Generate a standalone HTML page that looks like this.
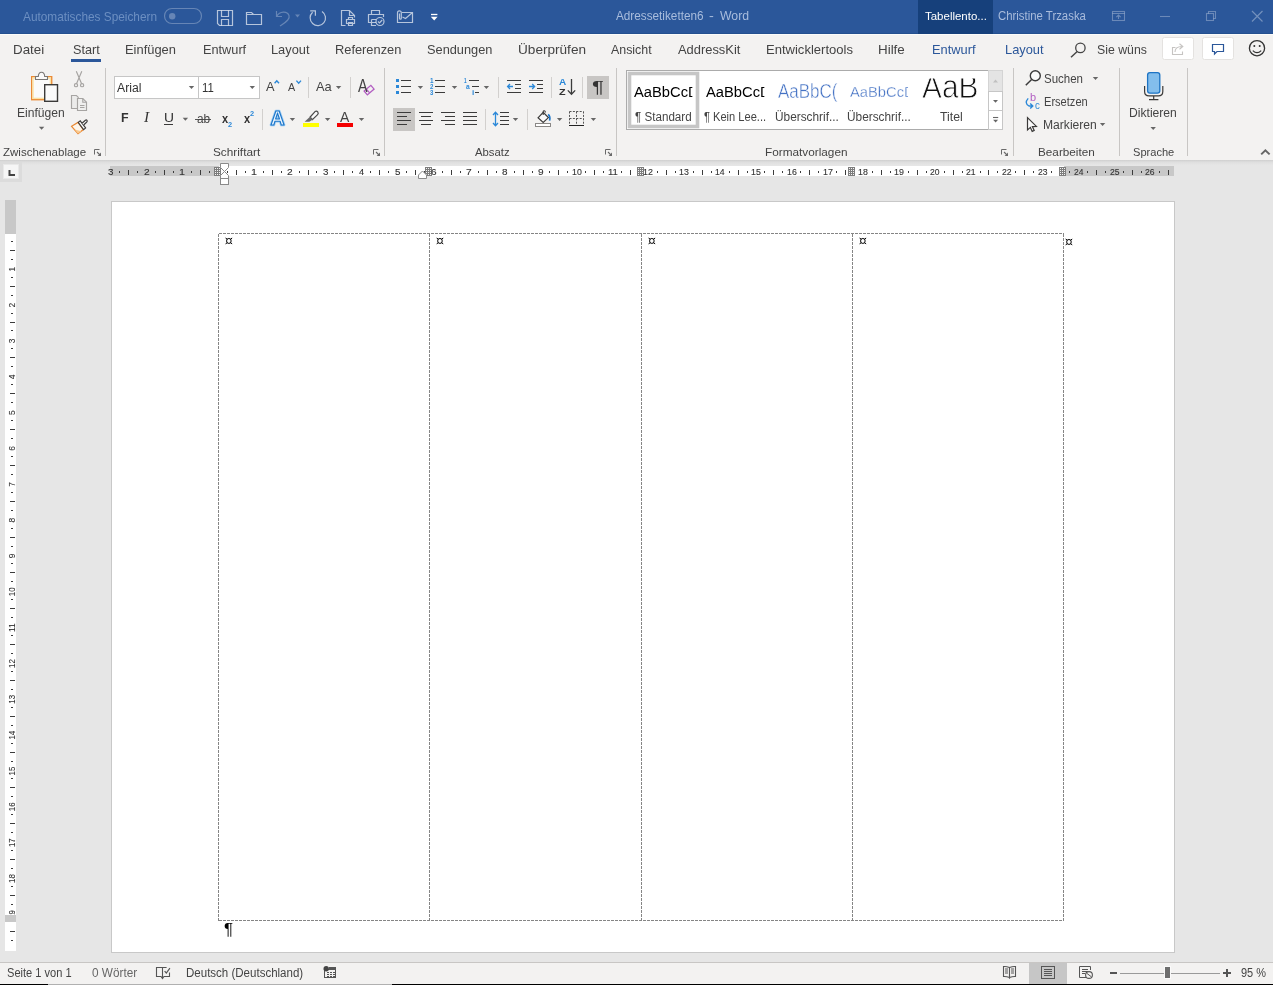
<!DOCTYPE html>
<html lang="de"><head><meta charset="utf-8"><title>Adressetiketten6 - Word</title>
<style>
html,body{margin:0;padding:0}
body{width:1273px;height:985px;position:relative;overflow:hidden;background:#e6e6e6;font-family:"Liberation Sans",sans-serif}
.b{position:absolute}
.t{position:absolute;white-space:pre;line-height:1;transform-origin:0 0;display:block}
svg{position:absolute;left:0;top:0;will-change:transform}
</style></head>
<body>
<div class="b" style="left:0;top:0;width:1273px;height:34px;background:#2b579a"></div>
<div class="b" style="left:0;top:33px;width:1273px;height:1px;background:#24508f"></div>
<div class="b" style="left:918px;top:0;width:75px;height:34px;background:#16407b"></div>
<div class="b" style="left:0;top:34px;width:1273px;height:126px;background:#f3f2f1"></div>
<div class="b" style="left:0;top:34px;width:1273px;height:1px;background:#fbfbfa"></div>
<div class="b" style="left:0;top:160px;width:1273px;height:5px;background:linear-gradient(#cfcfcf,#dedede 40%,#e6e6e6)"></div>
<div class="b" style="left:71px;top:59px;width:30px;height:3px;background:#2b579a"></div>
<div class="b" style="left:111px;top:201px;width:1064px;height:752px;background:#fff;border:1px solid #c8c8c8;box-sizing:border-box;border-right-color:#c8c8c8"></div>
<div class="b" style="left:0;top:962px;width:1273px;height:1px;background:#c8c6c4"></div>
<div class="b" style="left:0;top:963px;width:1273px;height:22px;background:#f3f2f1"></div>
<div class="b" style="left:1029px;top:963px;width:38px;height:21px;background:#c6c6c6"></div>
<div class="b" style="left:0;top:984px;width:48px;height:1px;background:#000"></div>
<div class="b" style="left:48px;top:984px;width:344px;height:1px;background:#b0b0b0"></div>
<div class="b" style="left:392px;top:984px;width:881px;height:1px;background:#000"></div>
<svg width="1273" height="985" viewBox="0 0 1273 985">
<rect x="110" y="166" width="1064" height="10" fill="#fff"/>
<rect x="110" y="166" width="109" height="10" fill="#c8c8c8"/>
<rect x="1064" y="166" width="110" height="10" fill="#c8c8c8"/>
<rect x="119" y="171" width="1" height="2" fill="#3c3c3c"/>
<rect x="128" y="170" width="1" height="5" fill="#3c3c3c"/>
<rect x="137" y="171" width="1" height="2" fill="#3c3c3c"/>
<rect x="155" y="171" width="1" height="2" fill="#3c3c3c"/>
<rect x="164" y="170" width="1" height="5" fill="#3c3c3c"/>
<rect x="173" y="171" width="1" height="2" fill="#3c3c3c"/>
<rect x="191" y="171" width="1" height="2" fill="#3c3c3c"/>
<rect x="200" y="170" width="1" height="5" fill="#3c3c3c"/>
<rect x="209" y="171" width="1" height="2" fill="#3c3c3c"/>
<rect x="227" y="171" width="1" height="2" fill="#3c3c3c"/>
<rect x="236" y="170" width="1" height="5" fill="#3c3c3c"/>
<rect x="245" y="171" width="1" height="2" fill="#3c3c3c"/>
<rect x="263" y="171" width="1" height="2" fill="#3c3c3c"/>
<rect x="272" y="170" width="1" height="5" fill="#3c3c3c"/>
<rect x="281" y="171" width="1" height="2" fill="#3c3c3c"/>
<rect x="299" y="171" width="1" height="2" fill="#3c3c3c"/>
<rect x="308" y="170" width="1" height="5" fill="#3c3c3c"/>
<rect x="316" y="171" width="1" height="2" fill="#3c3c3c"/>
<rect x="334" y="171" width="1" height="2" fill="#3c3c3c"/>
<rect x="343" y="170" width="1" height="5" fill="#3c3c3c"/>
<rect x="352" y="171" width="1" height="2" fill="#3c3c3c"/>
<rect x="370" y="171" width="1" height="2" fill="#3c3c3c"/>
<rect x="379" y="170" width="1" height="5" fill="#3c3c3c"/>
<rect x="388" y="171" width="1" height="2" fill="#3c3c3c"/>
<rect x="406" y="171" width="1" height="2" fill="#3c3c3c"/>
<rect x="415" y="170" width="1" height="5" fill="#3c3c3c"/>
<rect x="424" y="171" width="1" height="2" fill="#3c3c3c"/>
<rect x="442" y="171" width="1" height="2" fill="#3c3c3c"/>
<rect x="451" y="170" width="1" height="5" fill="#3c3c3c"/>
<rect x="460" y="171" width="1" height="2" fill="#3c3c3c"/>
<rect x="478" y="171" width="1" height="2" fill="#3c3c3c"/>
<rect x="487" y="170" width="1" height="5" fill="#3c3c3c"/>
<rect x="496" y="171" width="1" height="2" fill="#3c3c3c"/>
<rect x="514" y="171" width="1" height="2" fill="#3c3c3c"/>
<rect x="523" y="170" width="1" height="5" fill="#3c3c3c"/>
<rect x="532" y="171" width="1" height="2" fill="#3c3c3c"/>
<rect x="549" y="171" width="1" height="2" fill="#3c3c3c"/>
<rect x="558" y="170" width="1" height="5" fill="#3c3c3c"/>
<rect x="567" y="171" width="1" height="2" fill="#3c3c3c"/>
<rect x="585" y="171" width="1" height="2" fill="#3c3c3c"/>
<rect x="594" y="170" width="1" height="5" fill="#3c3c3c"/>
<rect x="603" y="171" width="1" height="2" fill="#3c3c3c"/>
<rect x="621" y="171" width="1" height="2" fill="#3c3c3c"/>
<rect x="630" y="170" width="1" height="5" fill="#3c3c3c"/>
<rect x="639" y="171" width="1" height="2" fill="#3c3c3c"/>
<rect x="657" y="171" width="1" height="2" fill="#3c3c3c"/>
<rect x="666" y="170" width="1" height="5" fill="#3c3c3c"/>
<rect x="675" y="171" width="1" height="2" fill="#3c3c3c"/>
<rect x="693" y="171" width="1" height="2" fill="#3c3c3c"/>
<rect x="702" y="170" width="1" height="5" fill="#3c3c3c"/>
<rect x="711" y="171" width="1" height="2" fill="#3c3c3c"/>
<rect x="729" y="171" width="1" height="2" fill="#3c3c3c"/>
<rect x="738" y="170" width="1" height="5" fill="#3c3c3c"/>
<rect x="747" y="171" width="1" height="2" fill="#3c3c3c"/>
<rect x="764" y="171" width="1" height="2" fill="#3c3c3c"/>
<rect x="773" y="170" width="1" height="5" fill="#3c3c3c"/>
<rect x="782" y="171" width="1" height="2" fill="#3c3c3c"/>
<rect x="800" y="171" width="1" height="2" fill="#3c3c3c"/>
<rect x="809" y="170" width="1" height="5" fill="#3c3c3c"/>
<rect x="818" y="171" width="1" height="2" fill="#3c3c3c"/>
<rect x="836" y="171" width="1" height="2" fill="#3c3c3c"/>
<rect x="845" y="170" width="1" height="5" fill="#3c3c3c"/>
<rect x="854" y="171" width="1" height="2" fill="#3c3c3c"/>
<rect x="872" y="171" width="1" height="2" fill="#3c3c3c"/>
<rect x="881" y="170" width="1" height="5" fill="#3c3c3c"/>
<rect x="890" y="171" width="1" height="2" fill="#3c3c3c"/>
<rect x="908" y="171" width="1" height="2" fill="#3c3c3c"/>
<rect x="917" y="170" width="1" height="5" fill="#3c3c3c"/>
<rect x="926" y="171" width="1" height="2" fill="#3c3c3c"/>
<rect x="944" y="171" width="1" height="2" fill="#3c3c3c"/>
<rect x="953" y="170" width="1" height="5" fill="#3c3c3c"/>
<rect x="962" y="171" width="1" height="2" fill="#3c3c3c"/>
<rect x="980" y="171" width="1" height="2" fill="#3c3c3c"/>
<rect x="988" y="170" width="1" height="5" fill="#3c3c3c"/>
<rect x="997" y="171" width="1" height="2" fill="#3c3c3c"/>
<rect x="1015" y="171" width="1" height="2" fill="#3c3c3c"/>
<rect x="1024" y="170" width="1" height="5" fill="#3c3c3c"/>
<rect x="1033" y="171" width="1" height="2" fill="#3c3c3c"/>
<rect x="1051" y="171" width="1" height="2" fill="#3c3c3c"/>
<rect x="1060" y="170" width="1" height="5" fill="#3c3c3c"/>
<rect x="1069" y="171" width="1" height="2" fill="#3c3c3c"/>
<rect x="1087" y="171" width="1" height="2" fill="#3c3c3c"/>
<rect x="1096" y="170" width="1" height="5" fill="#3c3c3c"/>
<rect x="1105" y="171" width="1" height="2" fill="#3c3c3c"/>
<rect x="1123" y="171" width="1" height="2" fill="#3c3c3c"/>
<rect x="1132" y="170" width="1" height="5" fill="#3c3c3c"/>
<rect x="1141" y="171" width="1" height="2" fill="#3c3c3c"/>
<rect x="1159" y="171" width="1" height="2" fill="#3c3c3c"/>
<rect x="1168" y="170" width="1" height="5" fill="#3c3c3c"/>
<rect x="214" y="167" width="7" height="9" fill="#7d7d7d"/><rect x="215" y="168" width="1" height="1" fill="#f4f4f4"/><rect x="217" y="168" width="1" height="1" fill="#f4f4f4"/><rect x="219" y="168" width="1" height="1" fill="#f4f4f4"/><rect x="215" y="170" width="1" height="1" fill="#f4f4f4"/><rect x="217" y="170" width="1" height="1" fill="#f4f4f4"/><rect x="219" y="170" width="1" height="1" fill="#f4f4f4"/><rect x="215" y="172" width="1" height="1" fill="#f4f4f4"/><rect x="217" y="172" width="1" height="1" fill="#f4f4f4"/><rect x="219" y="172" width="1" height="1" fill="#f4f4f4"/><rect x="215" y="174" width="1" height="1" fill="#f4f4f4"/><rect x="217" y="174" width="1" height="1" fill="#f4f4f4"/><rect x="219" y="174" width="1" height="1" fill="#f4f4f4"/>
<rect x="425" y="167" width="7" height="9" fill="#7d7d7d"/><rect x="426" y="168" width="1" height="1" fill="#f4f4f4"/><rect x="428" y="168" width="1" height="1" fill="#f4f4f4"/><rect x="430" y="168" width="1" height="1" fill="#f4f4f4"/><rect x="426" y="170" width="1" height="1" fill="#f4f4f4"/><rect x="428" y="170" width="1" height="1" fill="#f4f4f4"/><rect x="430" y="170" width="1" height="1" fill="#f4f4f4"/><rect x="426" y="172" width="1" height="1" fill="#f4f4f4"/><rect x="428" y="172" width="1" height="1" fill="#f4f4f4"/><rect x="430" y="172" width="1" height="1" fill="#f4f4f4"/><rect x="426" y="174" width="1" height="1" fill="#f4f4f4"/><rect x="428" y="174" width="1" height="1" fill="#f4f4f4"/><rect x="430" y="174" width="1" height="1" fill="#f4f4f4"/>
<rect x="637" y="167" width="7" height="9" fill="#7d7d7d"/><rect x="638" y="168" width="1" height="1" fill="#f4f4f4"/><rect x="640" y="168" width="1" height="1" fill="#f4f4f4"/><rect x="642" y="168" width="1" height="1" fill="#f4f4f4"/><rect x="638" y="170" width="1" height="1" fill="#f4f4f4"/><rect x="640" y="170" width="1" height="1" fill="#f4f4f4"/><rect x="642" y="170" width="1" height="1" fill="#f4f4f4"/><rect x="638" y="172" width="1" height="1" fill="#f4f4f4"/><rect x="640" y="172" width="1" height="1" fill="#f4f4f4"/><rect x="642" y="172" width="1" height="1" fill="#f4f4f4"/><rect x="638" y="174" width="1" height="1" fill="#f4f4f4"/><rect x="640" y="174" width="1" height="1" fill="#f4f4f4"/><rect x="642" y="174" width="1" height="1" fill="#f4f4f4"/>
<rect x="848" y="167" width="7" height="9" fill="#7d7d7d"/><rect x="849" y="168" width="1" height="1" fill="#f4f4f4"/><rect x="851" y="168" width="1" height="1" fill="#f4f4f4"/><rect x="853" y="168" width="1" height="1" fill="#f4f4f4"/><rect x="849" y="170" width="1" height="1" fill="#f4f4f4"/><rect x="851" y="170" width="1" height="1" fill="#f4f4f4"/><rect x="853" y="170" width="1" height="1" fill="#f4f4f4"/><rect x="849" y="172" width="1" height="1" fill="#f4f4f4"/><rect x="851" y="172" width="1" height="1" fill="#f4f4f4"/><rect x="853" y="172" width="1" height="1" fill="#f4f4f4"/><rect x="849" y="174" width="1" height="1" fill="#f4f4f4"/><rect x="851" y="174" width="1" height="1" fill="#f4f4f4"/><rect x="853" y="174" width="1" height="1" fill="#f4f4f4"/>
<rect x="1059" y="167" width="7" height="9" fill="#7d7d7d"/><rect x="1060" y="168" width="1" height="1" fill="#f4f4f4"/><rect x="1062" y="168" width="1" height="1" fill="#f4f4f4"/><rect x="1064" y="168" width="1" height="1" fill="#f4f4f4"/><rect x="1060" y="170" width="1" height="1" fill="#f4f4f4"/><rect x="1062" y="170" width="1" height="1" fill="#f4f4f4"/><rect x="1064" y="170" width="1" height="1" fill="#f4f4f4"/><rect x="1060" y="172" width="1" height="1" fill="#f4f4f4"/><rect x="1062" y="172" width="1" height="1" fill="#f4f4f4"/><rect x="1064" y="172" width="1" height="1" fill="#f4f4f4"/><rect x="1060" y="174" width="1" height="1" fill="#f4f4f4"/><rect x="1062" y="174" width="1" height="1" fill="#f4f4f4"/><rect x="1064" y="174" width="1" height="1" fill="#f4f4f4"/>
<path d="M220.5 163.5 H228.5 V167.5 L224.5 171.5 L220.5 167.5 Z" fill="#fff" stroke="#8a8a8a"/>
<path d="M220.5 178.5 V175.5 L224.5 171.5 L228.5 175.5 V178.5 Z" fill="#fff" stroke="#8a8a8a"/>
<rect x="220.5" y="178.5" width="8" height="6" fill="#fff" stroke="#8a8a8a"/>
<path d="M418.5 178.5 V175 L422.5 171 L426.5 175 V178.5 Z" fill="#fff" stroke="#8a8a8a"/>
<rect x="0" y="162" width="22" height="20" fill="#dcdcdc"/>
<rect x="3.5" y="164.5" width="15" height="14" fill="#f6f6f6" stroke="#e9e9e9"/>
<path d="M9.5 170 V175 H15" fill="none" stroke="#444" stroke-width="2"/>
<rect x="5" y="200" width="11" height="751" fill="#fff"/>
<rect x="5" y="200" width="11" height="34" fill="#c8c8c8"/>
<rect x="5" y="915" width="11" height="7" fill="#c8c8c8"/>
<rect x="11" y="241" width="2" height="1" fill="#3c3c3c"/>
<rect x="10" y="250" width="5" height="1" fill="#3c3c3c"/>
<rect x="11" y="259" width="2" height="1" fill="#3c3c3c"/>
<rect x="11" y="277" width="2" height="1" fill="#3c3c3c"/>
<rect x="10" y="286" width="5" height="1" fill="#3c3c3c"/>
<rect x="11" y="295" width="2" height="1" fill="#3c3c3c"/>
<rect x="11" y="313" width="2" height="1" fill="#3c3c3c"/>
<rect x="10" y="322" width="5" height="1" fill="#3c3c3c"/>
<rect x="11" y="330" width="2" height="1" fill="#3c3c3c"/>
<rect x="11" y="348" width="2" height="1" fill="#3c3c3c"/>
<rect x="10" y="357" width="5" height="1" fill="#3c3c3c"/>
<rect x="11" y="366" width="2" height="1" fill="#3c3c3c"/>
<rect x="11" y="384" width="2" height="1" fill="#3c3c3c"/>
<rect x="10" y="393" width="5" height="1" fill="#3c3c3c"/>
<rect x="11" y="402" width="2" height="1" fill="#3c3c3c"/>
<rect x="11" y="420" width="2" height="1" fill="#3c3c3c"/>
<rect x="10" y="429" width="5" height="1" fill="#3c3c3c"/>
<rect x="11" y="438" width="2" height="1" fill="#3c3c3c"/>
<rect x="11" y="456" width="2" height="1" fill="#3c3c3c"/>
<rect x="10" y="465" width="5" height="1" fill="#3c3c3c"/>
<rect x="11" y="474" width="2" height="1" fill="#3c3c3c"/>
<rect x="11" y="492" width="2" height="1" fill="#3c3c3c"/>
<rect x="10" y="501" width="5" height="1" fill="#3c3c3c"/>
<rect x="11" y="510" width="2" height="1" fill="#3c3c3c"/>
<rect x="11" y="528" width="2" height="1" fill="#3c3c3c"/>
<rect x="10" y="537" width="5" height="1" fill="#3c3c3c"/>
<rect x="11" y="546" width="2" height="1" fill="#3c3c3c"/>
<rect x="11" y="563" width="2" height="1" fill="#3c3c3c"/>
<rect x="10" y="572" width="5" height="1" fill="#3c3c3c"/>
<rect x="11" y="581" width="2" height="1" fill="#3c3c3c"/>
<rect x="11" y="599" width="2" height="1" fill="#3c3c3c"/>
<rect x="10" y="608" width="5" height="1" fill="#3c3c3c"/>
<rect x="11" y="617" width="2" height="1" fill="#3c3c3c"/>
<rect x="11" y="635" width="2" height="1" fill="#3c3c3c"/>
<rect x="10" y="644" width="5" height="1" fill="#3c3c3c"/>
<rect x="11" y="653" width="2" height="1" fill="#3c3c3c"/>
<rect x="11" y="671" width="2" height="1" fill="#3c3c3c"/>
<rect x="10" y="680" width="5" height="1" fill="#3c3c3c"/>
<rect x="11" y="689" width="2" height="1" fill="#3c3c3c"/>
<rect x="11" y="707" width="2" height="1" fill="#3c3c3c"/>
<rect x="10" y="716" width="5" height="1" fill="#3c3c3c"/>
<rect x="11" y="725" width="2" height="1" fill="#3c3c3c"/>
<rect x="11" y="743" width="2" height="1" fill="#3c3c3c"/>
<rect x="10" y="752" width="5" height="1" fill="#3c3c3c"/>
<rect x="11" y="761" width="2" height="1" fill="#3c3c3c"/>
<rect x="11" y="778" width="2" height="1" fill="#3c3c3c"/>
<rect x="10" y="787" width="5" height="1" fill="#3c3c3c"/>
<rect x="11" y="796" width="2" height="1" fill="#3c3c3c"/>
<rect x="11" y="814" width="2" height="1" fill="#3c3c3c"/>
<rect x="10" y="823" width="5" height="1" fill="#3c3c3c"/>
<rect x="11" y="832" width="2" height="1" fill="#3c3c3c"/>
<rect x="11" y="850" width="2" height="1" fill="#3c3c3c"/>
<rect x="10" y="859" width="5" height="1" fill="#3c3c3c"/>
<rect x="11" y="868" width="2" height="1" fill="#3c3c3c"/>
<rect x="11" y="886" width="2" height="1" fill="#3c3c3c"/>
<rect x="10" y="895" width="5" height="1" fill="#3c3c3c"/>
<rect x="11" y="904" width="2" height="1" fill="#3c3c3c"/>
<rect x="10" y="931" width="5" height="1" fill="#3c3c3c"/>
<rect x="11" y="940" width="2" height="1" fill="#3c3c3c"/>
<line x1="218.5" y1="234" x2="218.5" y2="921" stroke="#858585" stroke-dasharray="3 1" stroke-dashoffset="0"/>
<line x1="429.5" y1="234" x2="429.5" y2="921" stroke="#858585" stroke-dasharray="3 1" stroke-dashoffset="0"/>
<line x1="641.5" y1="234" x2="641.5" y2="921" stroke="#858585" stroke-dasharray="3 1" stroke-dashoffset="0"/>
<line x1="852.5" y1="234" x2="852.5" y2="921" stroke="#858585" stroke-dasharray="3 1" stroke-dashoffset="0"/>
<line x1="1063.5" y1="234" x2="1063.5" y2="921" stroke="#858585" stroke-dasharray="3 1" stroke-dashoffset="0"/>
<line x1="219" y1="233.5" x2="1064" y2="233.5" stroke="#858585" stroke-dasharray="3 1"/>
<line x1="219" y1="920.5" x2="1064" y2="920.5" stroke="#858585" stroke-dasharray="3 1"/>
<g transform="translate(228.85,240.95)" stroke="#000" fill="none" stroke-width="1.0"><ellipse rx="2.3" ry="2.5"/><path d="M-1.6 -1.8 L-3.3 -2.9 M1.6 -1.8 L3.3 -2.9 M-1.6 1.8 L-3.3 2.9 M1.6 1.8 L3.3 2.9"/></g>
<g transform="translate(439.95,240.95)" stroke="#000" fill="none" stroke-width="1.0"><ellipse rx="2.3" ry="2.5"/><path d="M-1.6 -1.8 L-3.3 -2.9 M1.6 -1.8 L3.3 -2.9 M-1.6 1.8 L-3.3 2.9 M1.6 1.8 L3.3 2.9"/></g>
<g transform="translate(651.85,240.95)" stroke="#000" fill="none" stroke-width="1.0"><ellipse rx="2.3" ry="2.5"/><path d="M-1.6 -1.8 L-3.3 -2.9 M1.6 -1.8 L3.3 -2.9 M-1.6 1.8 L-3.3 2.9 M1.6 1.8 L3.3 2.9"/></g>
<g transform="translate(862.85,240.95)" stroke="#000" fill="none" stroke-width="1.0"><ellipse rx="2.3" ry="2.5"/><path d="M-1.6 -1.8 L-3.3 -2.9 M1.6 -1.8 L3.3 -2.9 M-1.6 1.8 L-3.3 2.9 M1.6 1.8 L3.3 2.9"/></g>
<g transform="translate(1068.95,241.95)" stroke="#000" fill="none" stroke-width="1.0"><ellipse rx="2.3" ry="2.5"/><path d="M-1.6 -1.8 L-3.3 -2.9 M1.6 -1.8 L3.3 -2.9 M-1.6 1.8 L-3.3 2.9 M1.6 1.8 L3.3 2.9"/></g>
<text transform="translate(15.2,269.2) rotate(-90)" text-anchor="middle" font-family="Liberation Sans" font-size="9.5" fill="#333" stroke="#333" stroke-width="0.1" textLength="4.7" lengthAdjust="spacingAndGlyphs">1</text>
<text transform="translate(15.2,305.1) rotate(-90)" text-anchor="middle" font-family="Liberation Sans" font-size="9.5" fill="#333" stroke="#333" stroke-width="0.1" textLength="4.7" lengthAdjust="spacingAndGlyphs">2</text>
<text transform="translate(15.2,340.9) rotate(-90)" text-anchor="middle" font-family="Liberation Sans" font-size="9.5" fill="#333" stroke="#333" stroke-width="0.1" textLength="4.7" lengthAdjust="spacingAndGlyphs">3</text>
<text transform="translate(15.2,376.8) rotate(-90)" text-anchor="middle" font-family="Liberation Sans" font-size="9.5" fill="#333" stroke="#333" stroke-width="0.1" textLength="4.7" lengthAdjust="spacingAndGlyphs">4</text>
<text transform="translate(15.2,412.6) rotate(-90)" text-anchor="middle" font-family="Liberation Sans" font-size="9.5" fill="#333" stroke="#333" stroke-width="0.1" textLength="4.7" lengthAdjust="spacingAndGlyphs">5</text>
<text transform="translate(15.2,448.4) rotate(-90)" text-anchor="middle" font-family="Liberation Sans" font-size="9.5" fill="#333" stroke="#333" stroke-width="0.1" textLength="4.7" lengthAdjust="spacingAndGlyphs">6</text>
<text transform="translate(15.2,484.3) rotate(-90)" text-anchor="middle" font-family="Liberation Sans" font-size="9.5" fill="#333" stroke="#333" stroke-width="0.1" textLength="4.7" lengthAdjust="spacingAndGlyphs">7</text>
<text transform="translate(15.2,520.1) rotate(-90)" text-anchor="middle" font-family="Liberation Sans" font-size="9.5" fill="#333" stroke="#333" stroke-width="0.1" textLength="4.7" lengthAdjust="spacingAndGlyphs">8</text>
<text transform="translate(15.2,556.0) rotate(-90)" text-anchor="middle" font-family="Liberation Sans" font-size="9.5" fill="#333" stroke="#333" stroke-width="0.1" textLength="4.7" lengthAdjust="spacingAndGlyphs">9</text>
<text transform="translate(15.2,591.8) rotate(-90)" text-anchor="middle" font-family="Liberation Sans" font-size="9.5" fill="#333" stroke="#333" stroke-width="0.1" textLength="8.8" lengthAdjust="spacingAndGlyphs">10</text>
<text transform="translate(15.2,627.6) rotate(-90)" text-anchor="middle" font-family="Liberation Sans" font-size="9.5" fill="#333" stroke="#333" stroke-width="0.1" textLength="8.8" lengthAdjust="spacingAndGlyphs">11</text>
<text transform="translate(15.2,663.5) rotate(-90)" text-anchor="middle" font-family="Liberation Sans" font-size="9.5" fill="#333" stroke="#333" stroke-width="0.1" textLength="8.8" lengthAdjust="spacingAndGlyphs">12</text>
<text transform="translate(15.2,699.3) rotate(-90)" text-anchor="middle" font-family="Liberation Sans" font-size="9.5" fill="#333" stroke="#333" stroke-width="0.1" textLength="8.8" lengthAdjust="spacingAndGlyphs">13</text>
<text transform="translate(15.2,735.2) rotate(-90)" text-anchor="middle" font-family="Liberation Sans" font-size="9.5" fill="#333" stroke="#333" stroke-width="0.1" textLength="8.8" lengthAdjust="spacingAndGlyphs">14</text>
<text transform="translate(15.2,771.0) rotate(-90)" text-anchor="middle" font-family="Liberation Sans" font-size="9.5" fill="#333" stroke="#333" stroke-width="0.1" textLength="8.8" lengthAdjust="spacingAndGlyphs">15</text>
<text transform="translate(15.2,806.8) rotate(-90)" text-anchor="middle" font-family="Liberation Sans" font-size="9.5" fill="#333" stroke="#333" stroke-width="0.1" textLength="8.8" lengthAdjust="spacingAndGlyphs">16</text>
<text transform="translate(15.2,842.7) rotate(-90)" text-anchor="middle" font-family="Liberation Sans" font-size="9.5" fill="#333" stroke="#333" stroke-width="0.1" textLength="8.8" lengthAdjust="spacingAndGlyphs">17</text>
<text transform="translate(15.2,878.5) rotate(-90)" text-anchor="middle" font-family="Liberation Sans" font-size="9.5" fill="#333" stroke="#333" stroke-width="0.1" textLength="8.8" lengthAdjust="spacingAndGlyphs">18</text>
<text transform="translate(15.2,914.4) rotate(-90)" text-anchor="middle" font-family="Liberation Sans" font-size="9.5" fill="#333" stroke="#333" stroke-width="0.1" textLength="8.8" lengthAdjust="spacingAndGlyphs">19</text>
<rect x="5" y="915" width="11" height="7" fill="#c8c8c8"/>
<g fill="none" stroke="rgba(255,255,255,.66)" stroke-width="1.2">
<rect x="164.5" y="8.5" width="37" height="15" rx="7.5" stroke="rgba(255,255,255,.28)"/>
<circle cx="172.2" cy="16.2" r="3.2" fill="rgba(255,255,255,.28)" stroke="none"/>
<path d="M217.5 10.5 H232.5 V25.5 H219.5 L217.5 23.5 Z"/>
<path d="M221.5 10.5 V16.5 H228.5 V10.5 M221.5 25.5 V19.5 H228.5 V25.5"/>
<path d="M246.5 24.5 V12.5 H251.5 L253.5 14.5 H261.5 V24.5 Z M246.5 14.5 H253.5"/>
<path d="M276.5 11 V16.5 H282 M277 16 C279.5 11.5 287 10.5 289 15.5 C290.5 19.5 285 22.5 280 26" stroke="rgba(255,255,255,.28)"/>
<path d="M295 14.5 H300 L297.5 17.5 Z" fill="rgba(255,255,255,.28)" stroke="none"/>
<path d="M310.2 10.8 H315.4 V15.8 M322 11.4 A7.7 7.7 0 1 1 312.6 12.2"/>
<path d="M345.5 25.5 H341.5 V10.5 H349.5 L354.5 15.5 V17.5 M349.5 10.5 V15.5 H354.5"/>
<path d="M346.5 19.5 H354.5 V23.5 H346.5 Z M348.5 19.5 V17.5 H352.5 V19.5 M348.5 22.5 H352.5 V25.5 H348.5 Z"/>
<path d="M371.5 14.5 V10.5 H379.5 V14.5 M376 22.5 H368.5 V14.5 H383.5 V17 M371.5 19.5 V25.5 H376 M371.5 19.5 H376"/>
<circle cx="380" cy="21.5" r="4"/>
<path d="M378 21.5 L379.5 23 L382.2 20"/>
<path d="M402 12.5 H412.5 V22.5 H397.5 V20 M412.5 12.5 L405.5 18.5 L402.5 17"/>
<path d="M397.5 20 V12.8 A1.9 1.9 0 0 1 401.3 12.8 V18.2 A0.9 0.9 0 0 1 399.5 18.2 V13.5"/>
</g>
<path d="M431 14.5 H437.4" stroke="#fff" stroke-width="1.3"/><path d="M430.8 16.8 H437.6 L434.2 20.4 Z" fill="#fff"/>
<g fill="none" stroke="rgba(255,255,255,.3)" stroke-width="1.1">
<rect x="1112.5" y="11.5" width="12" height="9"/><path d="M1112.5 13.5 H1124.5 M1118.5 19 V15.2 M1116.3 17.2 L1118.5 15 L1120.7 17.2"/>
<path d="M1160 16.5 H1170"/>
<rect x="1206.5" y="13.5" width="7" height="7"/><path d="M1208.5 13.5 V11.5 H1215.5 V18.5 H1213.5"/>
</g>
<path d="M1252 11 L1262.5 21.5 M1262.5 11 L1252 21.5" stroke="rgba(255,255,255,.34)" stroke-width="1.2" fill="none"/>
<circle cx="1080.4" cy="47.9" r="4.7" fill="none" stroke="#444" stroke-width="1.3"/><path d="M1077.2 51.4 L1071 57.2" stroke="#444" stroke-width="1.4"/>
<rect x="1162.5" y="37.5" width="31" height="22" rx="2" fill="#fff" stroke="#e4e2e0"/>
<g fill="none" stroke="#c6c4c2" stroke-width="1.1"><path d="M1175.5 47.5 H1172.5 V54.5 H1182.5 V51.5"/><path d="M1175 52 C1175 48 1178 46.5 1182 46.5 M1179.5 43.8 L1182.8 46.5 L1179.5 49.2"/></g>
<rect x="1202.5" y="37.5" width="31" height="22" rx="2" fill="#fff" stroke="#e4e2e0"/>
<path d="M1212.5 44.5 H1223.5 V51.5 H1217 L1214.5 54 V51.5 H1212.5 Z" fill="none" stroke="#2b579a" stroke-width="1.2"/>
<circle cx="1257" cy="48.2" r="7.6" fill="none" stroke="#333" stroke-width="1.3"/><circle cx="1254.3" cy="46" r="1" fill="#333"/><circle cx="1259.7" cy="46" r="1" fill="#333"/><path d="M1252.8 50.6 Q1257 54.8 1261.2 50.6" fill="none" stroke="#333" stroke-width="1.2"/>
<rect x="105" y="68" width="1" height="88" fill="#c8c6c4"/>
<rect x="384" y="68" width="1" height="88" fill="#c8c6c4"/>
<rect x="616" y="68" width="1" height="88" fill="#c8c6c4"/>
<rect x="1013" y="68" width="1" height="88" fill="#c8c6c4"/>
<rect x="1119" y="68" width="1" height="88" fill="#c8c6c4"/>
<rect x="1187" y="68" width="1" height="88" fill="#c8c6c4"/>
<rect x="308" y="77" width="1" height="21" fill="#d2d0ce"/>
<rect x="350" y="77" width="1" height="21" fill="#d2d0ce"/>
<rect x="262" y="109" width="1" height="21" fill="#d2d0ce"/>
<rect x="498" y="77" width="1" height="21" fill="#d2d0ce"/>
<rect x="551" y="77" width="1" height="21" fill="#d2d0ce"/>
<rect x="582" y="77" width="1" height="21" fill="#d2d0ce"/>
<rect x="485" y="109" width="1" height="21" fill="#d2d0ce"/>
<rect x="527" y="109" width="1" height="21" fill="#d2d0ce"/>
<path d="M94.5 154.5 V149.5 H99.5" fill="none" stroke="#6a6a6a"/><path d="M97 152 L100.5 155.5" stroke="#6a6a6a" stroke-width="1.1"/><path d="M101 152.6 V156 H97.6 Z" fill="#6a6a6a"/>
<path d="M373.5 154.5 V149.5 H378.5" fill="none" stroke="#6a6a6a"/><path d="M376 152 L379.5 155.5" stroke="#6a6a6a" stroke-width="1.1"/><path d="M380 152.6 V156 H376.6 Z" fill="#6a6a6a"/>
<path d="M605.5 154.5 V149.5 H610.5" fill="none" stroke="#6a6a6a"/><path d="M608 152 L611.5 155.5" stroke="#6a6a6a" stroke-width="1.1"/><path d="M612 152.6 V156 H608.6 Z" fill="#6a6a6a"/>
<path d="M1001.5 154.5 V149.5 H1006.5" fill="none" stroke="#6a6a6a"/><path d="M1004 152 L1007.5 155.5" stroke="#6a6a6a" stroke-width="1.1"/><path d="M1008 152.6 V156 H1004.6 Z" fill="#6a6a6a"/>
<path d="M1261.2 154.4 L1265.4 150.4 L1269.6 154.4" fill="none" stroke="#666" stroke-width="2"/>
<rect x="31.7" y="76.7" width="20" height="23" fill="#fafafa" stroke="#ea8a35" stroke-width="1.4"/>
<rect x="33" y="78" width="17.4" height="20.4" fill="none" stroke="#fbe2a4" stroke-width="1.4"/>
<path d="M35.5 79.5 V76.5 H38.3 C38.5 73 39.8 72.3 41.5 72.3 C43.2 72.3 44.5 73 44.7 76.5 H47.5 V79.5 Z" fill="#fafafa" stroke="#797775" stroke-width="1.1"/>
<rect x="44.7" y="84.7" width="12.8" height="16.6" fill="#fafafa" stroke="#3b3a39" stroke-width="1.4"/>
<path d="M38.9 126.7 H44.3 L41.6 129.7 Z" fill="#666"/>
<g fill="none" stroke="#a6a4a2" stroke-width="1.15"><path d="M76.3 71.3 L81.6 83.7 M81.8 71.3 L76.5 83.7"/><circle cx="76.0" cy="85.2" r="1.6"/><circle cx="82.1" cy="85.2" r="1.6"/></g>
<g fill="#ebebea" stroke="#a6a4a2" stroke-width="1.15"><path d="M77.5 108.5 H71.5 V95.5 H76.4 L78.2 97.2 V99"/><path d="M77.5 98.5 H82.8 L86.5 102.2 V110.5 H77.5 Z" fill="#efefee"/><path d="M82.8 98.5 V102.2 H86.5 M80 105.5 H84.5 M80 107.5 H84.5" fill="none"/></g>
<path d="M71.6 126.3 L78.0 122.4 L83.4 129.6 L78.0 133.6 Z" fill="#fdf6ec" stroke="#ea8a35" stroke-width="1.2"/>
<path d="M74.6 129.6 L81.4 131.2 L78 133.4 Z" fill="#f9c98f"/>
<path d="M78.2 122.4 L80.2 120.9 L85.6 128.0 L83.6 129.6 Z" fill="#fafafa" stroke="#3b3a39" stroke-width="1.15"/>
<path d="M82.0 123.2 L85.4 120.2 Q86.4 119.6 87.0 120.4 Q87.6 121.4 86.8 122.0 L83.6 125.0" fill="#fafafa" stroke="#3b3a39" stroke-width="1.15"/>
<rect x="114.5" y="76.5" width="84" height="22" fill="#fff" stroke="#c6c6c6"/>
<rect x="198.5" y="76.5" width="61" height="22" fill="#fff" stroke="#c6c6c6"/>
<path d="M188.8 85.9 H194.2 L191.5 88.9 Z" fill="#666"/>
<path d="M249.6 85.9 H255.0 L252.3 88.9 Z" fill="#666"/>
<rect x="164" y="124" width="9" height="1" fill="#3b3b3b"/>
<path d="M182.7 117.7 H188.1 L185.4 120.7 Z" fill="#666"/>
<rect x="195" y="119" width="16" height="1" fill="#555"/>
<path d="M274.6 83.2 L276.8 80.7 L279 83.2" fill="none" stroke="#2b88d8" stroke-width="1.4"/>
<path d="M296.4 80.6 L298.7 83.1 L301 80.6" fill="none" stroke="#2b88d8" stroke-width="1.4"/>
<path d="M335.9 85.9 H341.3 L338.6 88.9 Z" fill="#666"/>
<g transform="translate(369.1 90.1) rotate(-40)"><rect x="-4.4" y="-2.5" width="8.8" height="5" fill="#f3f2f1" stroke="#b25fc2" stroke-width="1.3"/><path d="M-1.4 -2.5 V2.5" stroke="#b25fc2" stroke-width="1.2"/></g>
<path d="M289.7 117.9 H295.1 L292.4 120.9 Z" fill="#666"/>
<path d="M324.9 117.9 H330.3 L327.6 120.9 Z" fill="#666"/>
<path d="M358.8 117.9 H364.2 L361.5 120.9 Z" fill="#666"/>
<text x="277.5" y="125.2" text-anchor="middle" font-family="Liberation Sans" font-weight="bold" font-size="19.5" fill="#fff" stroke="#9cccf3" stroke-width="2.6" stroke-linejoin="round">A</text>
<text x="277.5" y="125.2" text-anchor="middle" font-family="Liberation Sans" font-weight="bold" font-size="19.5" fill="#eaf4fd" stroke="#1b75c9" stroke-width="1.1" stroke-linejoin="round">A</text>
<rect x="303" y="123" width="16" height="4" fill="#ffff00"/>
<path d="M310.2 117 L315 111.6 Q316.6 110.6 317.8 112 Q318.8 113.4 317.6 114.6 L312.4 119.6 Z" fill="#fafafa" stroke="#4a4a4a" stroke-width="1.2"/>
<path d="M310 116.8 L312.8 119.6 L309.4 121.8 L304.6 121.8 Z" fill="#6a6a6a"/>
<rect x="337" y="123" width="16" height="4" fill="#f40000"/>
<rect x="396" y="79" width="3" height="3" fill="#2b88d8"/>
<rect x="401" y="80" width="10" height="1" fill="#3b3b3b"/>
<rect x="396" y="85" width="3" height="3" fill="#2b88d8"/>
<rect x="401" y="86" width="10" height="1" fill="#3b3b3b"/>
<rect x="396" y="91" width="3" height="3" fill="#2b88d8"/>
<rect x="401" y="92" width="10" height="1" fill="#3b3b3b"/>
<path d="M417.7 85.9 H423.1 L420.4 88.9 Z" fill="#666"/>
<rect x="435" y="80" width="10" height="1" fill="#3b3b3b"/>
<rect x="435" y="86" width="10" height="1" fill="#3b3b3b"/>
<rect x="435" y="92" width="10" height="1" fill="#3b3b3b"/>
<path d="M451.8 85.9 H457.2 L454.5 88.9 Z" fill="#666"/>
<rect x="469" y="80" width="10" height="1" fill="#3b3b3b"/>
<rect x="472" y="86" width="7" height="1" fill="#3b3b3b"/>
<rect x="475" y="92" width="4" height="1" fill="#3b3b3b"/>
<path d="M483.7 85.9 H489.1 L486.4 88.9 Z" fill="#666"/>
<rect x="507" y="80" width="14" height="1" fill="#3b3b3b"/>
<rect x="515" y="84" width="6" height="1" fill="#3b3b3b"/>
<rect x="515" y="88" width="6" height="1" fill="#3b3b3b"/>
<rect x="507" y="92" width="14" height="1" fill="#3b3b3b"/>
<path d="M507.6 86.5 H513 M510 84 L507.6 86.5 L510 89" fill="none" stroke="#2b88d8" stroke-width="1.3"/>
<rect x="529" y="80" width="14" height="1" fill="#3b3b3b"/>
<rect x="537" y="84" width="6" height="1" fill="#3b3b3b"/>
<rect x="537" y="88" width="6" height="1" fill="#3b3b3b"/>
<rect x="529" y="92" width="14" height="1" fill="#3b3b3b"/>
<path d="M529 86.5 H534.6 M532.2 84 L534.6 86.5 L532.2 89" fill="none" stroke="#2b88d8" stroke-width="1.3"/>
<path d="M571.5 79 V94 M567.8 90.4 L571.5 94.2 L575.2 90.4" fill="none" stroke="#3b3b3b" stroke-width="1.3"/>
<rect x="587" y="76" width="22" height="23" fill="#c8c6c4"/>
<rect x="393" y="108" width="22" height="23" fill="#c8c6c4"/>
<rect x="397" y="112" width="14" height="1" fill="#3b3b3b"/>
<rect x="419" y="112" width="14" height="1" fill="#3b3b3b"/>
<rect x="441" y="112" width="14" height="1" fill="#3b3b3b"/>
<rect x="463" y="112" width="14" height="1" fill="#3b3b3b"/>
<rect x="500" y="112" width="9" height="1" fill="#3b3b3b"/>
<rect x="397" y="116" width="10" height="1" fill="#3b3b3b"/>
<rect x="421" y="116" width="10" height="1" fill="#3b3b3b"/>
<rect x="445" y="116" width="10" height="1" fill="#3b3b3b"/>
<rect x="463" y="116" width="14" height="1" fill="#3b3b3b"/>
<rect x="500" y="116" width="9" height="1" fill="#3b3b3b"/>
<rect x="397" y="120" width="14" height="1" fill="#3b3b3b"/>
<rect x="419" y="120" width="14" height="1" fill="#3b3b3b"/>
<rect x="441" y="120" width="14" height="1" fill="#3b3b3b"/>
<rect x="463" y="120" width="14" height="1" fill="#3b3b3b"/>
<rect x="500" y="120" width="9" height="1" fill="#3b3b3b"/>
<rect x="397" y="124" width="10" height="1" fill="#3b3b3b"/>
<rect x="421" y="124" width="10" height="1" fill="#3b3b3b"/>
<rect x="445" y="124" width="10" height="1" fill="#3b3b3b"/>
<rect x="463" y="124" width="14" height="1" fill="#3b3b3b"/>
<rect x="500" y="124" width="9" height="1" fill="#3b3b3b"/>
<path d="M495.5 112.5 V125.5 M493 115 L495.5 112.3 L498 115 M493 123 L495.5 125.7 L498 123" fill="none" stroke="#2b88d8" stroke-width="1.3"/>
<path d="M512.8 117.9 H518.2 L515.5 120.9 Z" fill="#666"/>
<rect x="535.5" y="123.5" width="15" height="3" fill="#fff" stroke="#8a8886"/>
<path d="M538 117.8 L543.2 112.4 L548.4 117.6 L543.2 122.4 Z" fill="#fafafa" stroke="#3b3a39" stroke-width="1.2"/>
<path d="M543.2 115 V111.8 Q543.2 110.6 544.4 110.8 Q545.4 111 545.4 112.4" fill="none" stroke="#3b3a39" stroke-width="1.1"/>
<path d="M548.2 114.4 Q550.6 116.4 549.6 120.6" fill="none" stroke="#1b75c9" stroke-width="1.7"/>
<path d="M556.9 117.9 H562.3 L559.6 120.9 Z" fill="#666"/>
<g stroke="#555" stroke-dasharray="2 1.4" fill="none"><path d="M569.5 111.5 H583.5 M569.5 111.5 V125 M583.5 111.5 V125 M576.5 111.5 V125 M569.5 118.5 H583.5"/></g>
<rect x="569" y="125" width="15" height="1" fill="#222"/>
<path d="M590.7 117.9 H596.1 L593.4 120.9 Z" fill="#666"/>
<rect x="626.5" y="70.5" width="376" height="59" fill="#fff" stroke="#ababab"/>
<rect x="629.5" y="73.5" width="68" height="53" fill="#fff" stroke="#c6c6c6" stroke-width="3.6"/>
<rect x="988.5" y="70.5" width="14" height="21" fill="#e4e4e4" stroke="#d4d4d4"/>
<rect x="988.5" y="91.5" width="14" height="19" fill="#fff" stroke="#c6c6c6"/>
<rect x="988.5" y="110.5" width="14" height="19" fill="#fff" stroke="#c6c6c6"/>
<path d="M993 82.5 H998 L995.5 79.6 Z" fill="#c0c0c0"/>
<path d="M993.0 100.0 H998.0 L995.5 102.8 Z" fill="#666"/>
<path d="M993 117.5 H998.2" stroke="#666" stroke-width="1.1"/><path d="M993.1 119.8 H998.1 L995.6 122.6 Z" fill="#666"/>
<circle cx="1035.3" cy="75.7" r="5" fill="#fafafa" stroke="#3b3b3b" stroke-width="1.4"/><path d="M1031.6 79.5 L1025.8 85.2" stroke="#3b3b3b" stroke-width="1.5"/>
<path d="M1092.8 77.0 H1098.2 L1095.5 80.0 Z" fill="#666"/>
<path d="M1099.9 123.0 H1105.3 L1102.6 126.0 Z" fill="#666"/>
<path d="M1028.2 98.4 Q1024 103.2 1029 106 H1032.6 M1030.2 103.4 L1032.8 106 L1030.2 108.6" fill="none" stroke="#2b88d8" stroke-width="1.4"/>
<path d="M1027.5 117.6 V130 L1030.4 127.4 L1032.2 131.4 L1034.2 130.4 L1032.4 126.6 L1036.4 126.4 Z" fill="#fafafa" stroke="#3b3a39" stroke-width="1.2" stroke-linejoin="miter"/>
<rect x="1147.6" y="72.6" width="12.2" height="20.6" rx="2.4" fill="#83beec" stroke="#1e74c4" stroke-width="1.3"/>
<path d="M1144.6 86 V91.4 Q1144.6 95.8 1149 95.8 H1158.4 Q1162.8 95.8 1162.8 91.4 V86 M1153.7 95.8 V99.5 M1149 99.6 H1158.4" fill="none" stroke="#3b3a39" stroke-width="1.2"/>
<path d="M1150.5 126.9 H1155.9 L1153.2 129.9 Z" fill="#666"/>
<g fill="none" stroke="#555" stroke-width="1.1"><path d="M162.5 967.5 H156.5 V976.5 H161 L162.5 978.6 L164 976.5 H169.5 V972.4 M162.5 967.5 V978 M162.5 967.5 H166.6"/><path d="M164.6 971.2 L166.3 973 L169.9 968.2" stroke-width="1.2"/></g>
<rect x="324.5" y="969.5" width="11" height="8" fill="none" stroke="#555"/>
<rect x="329" y="967" width="7" height="3" fill="#555"/>
<rect x="327" y="972" width="2" height="1" fill="#555"/>
<rect x="330" y="972" width="2" height="1" fill="#555"/>
<rect x="333" y="972" width="2" height="1" fill="#555"/>
<rect x="327" y="974" width="2" height="1" fill="#555"/>
<rect x="330" y="974" width="2" height="1" fill="#555"/>
<rect x="333" y="974" width="2" height="1" fill="#555"/>
<rect x="327" y="976" width="2" height="1" fill="#555"/>
<rect x="330" y="976" width="2" height="1" fill="#555"/>
<rect x="333" y="976" width="2" height="1" fill="#555"/>
<circle cx="326.2" cy="968.8" r="2.7" fill="#444"/>
<g fill="none" stroke="#555" stroke-width="1.1"><path d="M1009.5 967.5 V978.8 M1009.5 967.5 Q1006.5 966.3 1003.5 966.5 V976.5 Q1006.5 976.3 1009.5 977.5 Q1012.5 976.3 1015.5 976.5 V966.5 Q1012.5 966.3 1009.5 967.5"/><path d="M1005 969 H1008 M1005 971 H1008 M1005 973 H1008 M1011 969 H1014 M1011 971 H1014 M1011 973 H1014" stroke-width="1"/></g>
<rect x="1041.5" y="966.5" width="13" height="12" fill="none" stroke="#555"/>
<rect x="1044" y="969" width="8" height="1" fill="#555"/>
<rect x="1044" y="971" width="8" height="1" fill="#555"/>
<rect x="1044" y="973" width="8" height="1" fill="#555"/>
<rect x="1044" y="975" width="8" height="1" fill="#555"/>
<path d="M1086 977.5 H1079.5 V966.5 H1090.5 V970" fill="none" stroke="#555"/>
<rect x="1082" y="969" width="6" height="1" fill="#555"/>
<rect x="1082" y="971" width="6" height="1" fill="#555"/>
<rect x="1082" y="973" width="3" height="1" fill="#555"/>
<circle cx="1089" cy="975" r="3.4" fill="#f3f2f1" stroke="#555" stroke-width="1.1"/><path d="M1086.6 973.2 L1091.4 976.8" stroke="#555"/>
<rect x="1110" y="972" width="7" height="2" fill="#555"/>
<rect x="1120" y="973" width="100" height="1" fill="#9a9a9a"/>
<rect x="1164" y="966" width="7" height="13" fill="#fafafa"/><rect x="1165" y="967" width="5" height="11" fill="#6e6e6e"/>
<rect x="1223" y="972" width="8" height="2" fill="#555"/><rect x="1226" y="969" width="2" height="8" fill="#555"/>
</svg>
<div id="txt" style="position:absolute;left:0;top:0;width:1273px;height:985px;will-change:transform"><span class="t" id="t0" style='left:108.17px;top:167.26px;font-size:9.5px;color:#333;font-weight:normal;font-style:normal;font-family:"Liberation Sans", sans-serif;transform:scaleX(1.0330);-webkit-text-stroke:0.12px #333;'>3</span>
<span class="t" id="t1" style='left:143.89px;top:167.26px;font-size:9.5px;color:#333;font-weight:normal;font-style:normal;font-family:"Liberation Sans", sans-serif;transform:scaleX(1.0682);-webkit-text-stroke:0.12px #333;'>2</span>
<span class="t" id="t2" style='left:179.42px;top:167.26px;font-size:9.5px;color:#333;font-weight:normal;font-style:normal;font-family:"Liberation Sans", sans-serif;transform:scaleX(1.1325);-webkit-text-stroke:0.12px #333;'>1</span>
<span class="t" id="t3" style='left:251.10px;top:167.26px;font-size:9.5px;color:#333;font-weight:normal;font-style:normal;font-family:"Liberation Sans", sans-serif;transform:scaleX(1.1325);-webkit-text-stroke:0.12px #333;'>1</span>
<span class="t" id="t4" style='left:287.25px;top:167.26px;font-size:9.5px;color:#333;font-weight:normal;font-style:normal;font-family:"Liberation Sans", sans-serif;transform:scaleX(1.0682);-webkit-text-stroke:0.12px #333;'>2</span>
<span class="t" id="t5" style='left:323.21px;top:167.26px;font-size:9.5px;color:#333;font-weight:normal;font-style:normal;font-family:"Liberation Sans", sans-serif;transform:scaleX(1.0330);-webkit-text-stroke:0.12px #333;'>3</span>
<span class="t" id="t6" style='left:359.22px;top:167.26px;font-size:9.5px;color:#333;font-weight:normal;font-style:normal;font-family:"Liberation Sans", sans-serif;transform:scaleX(0.9691);-webkit-text-stroke:0.12px #333;'>4</span>
<span class="t" id="t7" style='left:394.89px;top:167.26px;font-size:9.5px;color:#333;font-weight:normal;font-style:normal;font-family:"Liberation Sans", sans-serif;transform:scaleX(1.0330);-webkit-text-stroke:0.12px #333;'>5</span>
<span class="t" id="t8" style='left:430.61px;top:167.26px;font-size:9.5px;color:#333;font-weight:normal;font-style:normal;font-family:"Liberation Sans", sans-serif;transform:scaleX(1.0562);-webkit-text-stroke:0.12px #333;'>6</span>
<span class="t" id="t9" style='left:466.45px;top:167.26px;font-size:9.5px;color:#333;font-weight:normal;font-style:normal;font-family:"Liberation Sans", sans-serif;transform:scaleX(1.0682);-webkit-text-stroke:0.12px #333;'>7</span>
<span class="t" id="t10" style='left:502.35px;top:167.26px;font-size:9.5px;color:#333;font-weight:normal;font-style:normal;font-family:"Liberation Sans", sans-serif;transform:scaleX(1.0444);-webkit-text-stroke:0.12px #333;'>8</span>
<span class="t" id="t11" style='left:538.19px;top:167.26px;font-size:9.5px;color:#333;font-weight:normal;font-style:normal;font-family:"Liberation Sans", sans-serif;transform:scaleX(1.0562);-webkit-text-stroke:0.12px #333;'>9</span>
<span class="t" id="t12" style='left:571.75px;top:167.26px;font-size:9.5px;color:#333;font-weight:normal;font-style:normal;font-family:"Liberation Sans", sans-serif;transform:scaleX(0.9231);-webkit-text-stroke:0.12px #333;'>10</span>
<span class="t" id="t13" style='left:607.53px;top:167.26px;font-size:9.5px;color:#333;font-weight:normal;font-style:normal;font-family:"Liberation Sans", sans-serif;transform:scaleX(1.0082);-webkit-text-stroke:0.12px #333;'>11</span>
<span class="t" id="t14" style='left:643.43px;top:167.26px;font-size:9.5px;color:#333;font-weight:normal;font-style:normal;font-family:"Liberation Sans", sans-serif;transform:scaleX(0.9329);-webkit-text-stroke:0.12px #333;'>12</span>
<span class="t" id="t15" style='left:679.27px;top:167.26px;font-size:9.5px;color:#333;font-weight:normal;font-style:normal;font-family:"Liberation Sans", sans-serif;transform:scaleX(0.9279);-webkit-text-stroke:0.12px #333;'>13</span>
<span class="t" id="t16" style='left:715.12px;top:167.26px;font-size:9.5px;color:#333;font-weight:normal;font-style:normal;font-family:"Liberation Sans", sans-serif;transform:scaleX(0.9135);-webkit-text-stroke:0.12px #333;'>14</span>
<span class="t" id="t17" style='left:750.95px;top:167.26px;font-size:9.5px;color:#333;font-weight:normal;font-style:normal;font-family:"Liberation Sans", sans-serif;transform:scaleX(0.9279);-webkit-text-stroke:0.12px #333;'>15</span>
<span class="t" id="t18" style='left:786.79px;top:167.26px;font-size:9.5px;color:#333;font-weight:normal;font-style:normal;font-family:"Liberation Sans", sans-serif;transform:scaleX(0.9279);-webkit-text-stroke:0.12px #333;'>16</span>
<span class="t" id="t19" style='left:822.63px;top:167.26px;font-size:9.5px;color:#333;font-weight:normal;font-style:normal;font-family:"Liberation Sans", sans-serif;transform:scaleX(0.9329);-webkit-text-stroke:0.12px #333;'>17</span>
<span class="t" id="t20" style='left:858.47px;top:167.26px;font-size:9.5px;color:#333;font-weight:normal;font-style:normal;font-family:"Liberation Sans", sans-serif;transform:scaleX(0.9279);-webkit-text-stroke:0.12px #333;'>18</span>
<span class="t" id="t21" style='left:894.31px;top:167.26px;font-size:9.5px;color:#333;font-weight:normal;font-style:normal;font-family:"Liberation Sans", sans-serif;transform:scaleX(0.9329);-webkit-text-stroke:0.12px #333;'>19</span>
<span class="t" id="t22" style='left:930.40px;top:167.26px;font-size:9.5px;color:#333;font-weight:normal;font-style:normal;font-family:"Liberation Sans", sans-serif;transform:scaleX(0.8995);-webkit-text-stroke:0.12px #333;'>20</span>
<span class="t" id="t23" style='left:966.23px;top:167.26px;font-size:9.5px;color:#333;font-weight:normal;font-style:normal;font-family:"Liberation Sans", sans-serif;transform:scaleX(0.9088);-webkit-text-stroke:0.12px #333;'>21</span>
<span class="t" id="t24" style='left:1002.07px;top:167.26px;font-size:9.5px;color:#333;font-weight:normal;font-style:normal;font-family:"Liberation Sans", sans-serif;transform:scaleX(0.9088);-webkit-text-stroke:0.12px #333;'>22</span>
<span class="t" id="t25" style='left:1037.91px;top:167.26px;font-size:9.5px;color:#333;font-weight:normal;font-style:normal;font-family:"Liberation Sans", sans-serif;transform:scaleX(0.9041);-webkit-text-stroke:0.12px #333;'>23</span>
<span class="t" id="t26" style='left:1073.76px;top:167.26px;font-size:9.5px;color:#333;font-weight:normal;font-style:normal;font-family:"Liberation Sans", sans-serif;transform:scaleX(0.8904);-webkit-text-stroke:0.12px #333;'>24</span>
<span class="t" id="t27" style='left:1109.59px;top:167.26px;font-size:9.5px;color:#333;font-weight:normal;font-style:normal;font-family:"Liberation Sans", sans-serif;transform:scaleX(0.9041);-webkit-text-stroke:0.12px #333;'>25</span>
<span class="t" id="t28" style='left:1145.43px;top:167.26px;font-size:9.5px;color:#333;font-weight:normal;font-style:normal;font-family:"Liberation Sans", sans-serif;transform:scaleX(0.9041);-webkit-text-stroke:0.12px #333;'>26</span>
<span class="t" id="t29" style='left:224.27px;top:921.76px;font-size:16px;color:#000;font-weight:normal;font-style:normal;font-family:"Liberation Sans", sans-serif;transform:scaleX(1.0533);'>¶</span>
<span class="t" id="t30" style='left:23.00px;top:10.30px;font-size:13px;color:#6c8fc2;font-weight:normal;font-style:normal;font-family:"Liberation Sans", sans-serif;transform:scaleX(0.9088);'>Automatisches Speichern</span>
<span class="t" id="t31" style='left:616.20px;top:10.14px;font-size:12px;color:#a9bddd;font-weight:normal;font-style:normal;font-family:"Liberation Sans", sans-serif;transform:scaleX(0.9791);'>Adressetiketten6</span>
<span class="t" id="t32" style='left:708.80px;top:10.14px;font-size:12px;color:#a9bddd;font-weight:normal;font-style:normal;font-family:"Liberation Sans", sans-serif;transform:scaleX(1.2000);'>-</span>
<span class="t" id="t33" style='left:720.15px;top:10.14px;font-size:12px;color:#a9bddd;font-weight:normal;font-style:normal;font-family:"Liberation Sans", sans-serif;transform:scaleX(1.0224);'>Word</span>
<span class="t" id="t34" style='left:925.05px;top:10.57px;font-size:11.5px;color:#fff;font-weight:normal;font-style:normal;font-family:"Liberation Sans", sans-serif;transform:scaleX(0.9980);'>Tabellento...</span>
<span class="t" id="t35" style='left:997.65px;top:9.72px;font-size:12.5px;color:#a9bcdc;font-weight:normal;font-style:normal;font-family:"Liberation Sans", sans-serif;transform:scaleX(0.9103);'>Christine Trzaska</span>
<span class="t" id="t36" style='left:13.26px;top:43.30px;font-size:13px;color:#444;font-weight:normal;font-style:normal;font-family:"Liberation Sans", sans-serif;transform:scaleX(1.0254);'>Datei</span>
<span class="t" id="t37" style='left:73.00px;top:43.30px;font-size:13px;color:#444;font-weight:normal;font-style:normal;font-family:"Liberation Sans", sans-serif;transform:scaleX(0.9745);'>Start</span>
<span class="t" id="t38" style='left:125.49px;top:43.30px;font-size:13px;color:#444;font-weight:normal;font-style:normal;font-family:"Liberation Sans", sans-serif;transform:scaleX(0.9924);'>Einfügen</span>
<span class="t" id="t39" style='left:202.51px;top:43.30px;font-size:13px;color:#444;font-weight:normal;font-style:normal;font-family:"Liberation Sans", sans-serif;transform:scaleX(0.9791);'>Entwurf</span>
<span class="t" id="t40" style='left:271.20px;top:43.30px;font-size:13px;color:#444;font-weight:normal;font-style:normal;font-family:"Liberation Sans", sans-serif;transform:scaleX(0.9853);'>Layout</span>
<span class="t" id="t41" style='left:335.30px;top:43.30px;font-size:13px;color:#444;font-weight:normal;font-style:normal;font-family:"Liberation Sans", sans-serif;transform:scaleX(0.9868);'>Referenzen</span>
<span class="t" id="t42" style='left:427.20px;top:43.30px;font-size:13px;color:#444;font-weight:normal;font-style:normal;font-family:"Liberation Sans", sans-serif;transform:scaleX(0.9836);'>Sendungen</span>
<span class="t" id="t43" style='left:517.65px;top:43.30px;font-size:13px;color:#444;font-weight:normal;font-style:normal;font-family:"Liberation Sans", sans-serif;transform:scaleX(1.0457);'>Überprüfen</span>
<span class="t" id="t44" style='left:611.10px;top:43.30px;font-size:13px;color:#444;font-weight:normal;font-style:normal;font-family:"Liberation Sans", sans-serif;transform:scaleX(0.9537);'>Ansicht</span>
<span class="t" id="t45" style='left:678.30px;top:43.30px;font-size:13px;color:#444;font-weight:normal;font-style:normal;font-family:"Liberation Sans", sans-serif;transform:scaleX(0.9920);'>AddressKit</span>
<span class="t" id="t46" style='left:766.18px;top:43.30px;font-size:13px;color:#444;font-weight:normal;font-style:normal;font-family:"Liberation Sans", sans-serif;transform:scaleX(1.0026);'>Entwicklertools</span>
<span class="t" id="t47" style='left:878.35px;top:43.30px;font-size:13px;color:#444;font-weight:normal;font-style:normal;font-family:"Liberation Sans", sans-serif;transform:scaleX(1.0301);'>Hilfe</span>
<span class="t" id="t48" style='left:932.20px;top:43.30px;font-size:13px;color:#2b579a;font-weight:normal;font-style:normal;font-family:"Liberation Sans", sans-serif;transform:scaleX(0.9861);'>Entwurf</span>
<span class="t" id="t49" style='left:1005.30px;top:43.30px;font-size:13px;color:#2b579a;font-weight:normal;font-style:normal;font-family:"Liberation Sans", sans-serif;transform:scaleX(0.9879);'>Layout</span>
<span class="t" id="t50" style='left:1096.92px;top:43.30px;font-size:13px;color:#444;font-weight:normal;font-style:normal;font-family:"Liberation Sans", sans-serif;transform:scaleX(0.9454);'>Sie wüns</span>
<span class="t" id="t51" style='left:2.65px;top:146.57px;font-size:11.5px;color:#444;font-weight:normal;font-style:normal;font-family:"Liberation Sans", sans-serif;transform:scaleX(1.0005);'>Zwischenablage</span>
<span class="t" id="t52" style='left:212.79px;top:146.57px;font-size:11.5px;color:#444;font-weight:normal;font-style:normal;font-family:"Liberation Sans", sans-serif;transform:scaleX(1.0249);'>Schriftart</span>
<span class="t" id="t53" style='left:475.20px;top:146.57px;font-size:11.5px;color:#444;font-weight:normal;font-style:normal;font-family:"Liberation Sans", sans-serif;transform:scaleX(0.9854);'>Absatz</span>
<span class="t" id="t54" style='left:765.28px;top:146.57px;font-size:11.5px;color:#444;font-weight:normal;font-style:normal;font-family:"Liberation Sans", sans-serif;transform:scaleX(1.0242);'>Formatvorlagen</span>
<span class="t" id="t55" style='left:1037.68px;top:146.57px;font-size:11.5px;color:#444;font-weight:normal;font-style:normal;font-family:"Liberation Sans", sans-serif;transform:scaleX(1.0208);'>Bearbeiten</span>
<span class="t" id="t56" style='left:1132.52px;top:146.57px;font-size:11.5px;color:#444;font-weight:normal;font-style:normal;font-family:"Liberation Sans", sans-serif;transform:scaleX(0.9633);'>Sprache</span>
<span class="t" id="t57" style='left:17.44px;top:107.14px;font-size:12px;color:#444;font-weight:normal;font-style:normal;font-family:"Liberation Sans", sans-serif;transform:scaleX(1.0077);'>Einfügen</span>
<span class="t" id="t58" style='left:117.20px;top:82.14px;font-size:12px;color:#333;font-weight:normal;font-style:normal;font-family:"Liberation Sans", sans-serif;transform:scaleX(1.0155);'>Arial</span>
<span class="t" id="t59" style='left:201.75px;top:82.14px;font-size:12px;color:#333;font-weight:normal;font-style:normal;font-family:"Liberation Sans", sans-serif;transform:scaleX(0.9469);'>11</span>
<span class="t" id="t60" style='left:121.02px;top:111.30px;font-size:13px;color:#333;font-weight:bold;font-style:normal;font-family:"Liberation Sans", sans-serif;transform:scaleX(0.9548);'>F</span>
<span class="t" id="t61" style='left:144.44px;top:111.45px;font-size:14px;color:#333;font-weight:normal;font-style:italic;font-family:"Liberation Serif", serif;transform:scaleX(1.0971);'>I</span>
<span class="t" id="t62" style='left:163.54px;top:111.30px;font-size:13px;color:#333;font-weight:normal;font-style:normal;font-family:"Liberation Sans", sans-serif;transform:scaleX(1.0623);'>U</span>
<span class="t" id="t63" style='left:196.51px;top:113.14px;font-size:12px;color:#444;font-weight:normal;font-style:normal;font-family:"Liberation Sans", sans-serif;transform:scaleX(0.9860);'>ab</span>
<span class="t" id="t64" style='left:221.80px;top:112.30px;font-size:13px;color:#333;font-weight:bold;font-style:normal;font-family:"Liberation Sans", sans-serif;transform:scaleX(0.8479);'>x</span>
<span class="t" id="t65" style='left:228.35px;top:120.95px;font-size:7.5px;color:#2b88d8;font-weight:bold;font-style:normal;font-family:"Liberation Sans", sans-serif;transform:scaleX(0.9863);'>2</span>
<span class="t" id="t66" style='left:243.60px;top:112.30px;font-size:13px;color:#333;font-weight:bold;font-style:normal;font-family:"Liberation Sans", sans-serif;transform:scaleX(0.8479);'>x</span>
<span class="t" id="t67" style='left:250.35px;top:109.95px;font-size:7.5px;color:#2b88d8;font-weight:bold;font-style:normal;font-family:"Liberation Sans", sans-serif;transform:scaleX(0.9863);'>2</span>
<span class="t" id="t68" style='left:266.00px;top:80.30px;font-size:13px;color:#444;font-weight:normal;font-style:normal;font-family:"Liberation Sans", sans-serif;transform:scaleX(0.9846);'>A</span>
<span class="t" id="t69" style='left:288.20px;top:81.99px;font-size:11px;color:#444;font-weight:normal;font-style:normal;font-family:"Liberation Sans", sans-serif;transform:scaleX(0.9796);'>A</span>
<span class="t" id="t70" style='left:316.40px;top:80.30px;font-size:13px;color:#444;font-weight:normal;font-style:normal;font-family:"Liberation Sans", sans-serif;transform:scaleX(0.9885);'>Aa</span>
<span class="t" id="t71" style='left:357.80px;top:77.06px;font-size:18px;color:#444;font-weight:normal;font-style:normal;font-family:"Liberation Sans", sans-serif;transform:scaleX(0.7938);'>A</span>
<span class="t" id="t72" style='left:340.40px;top:109.40px;font-size:15px;color:#444;font-weight:normal;font-style:normal;font-family:"Liberation Sans", sans-serif;transform:scaleX(0.9327);'>A</span>
<span class="t" id="t73" style='left:429.64px;top:77.37px;font-size:7px;color:#2b88d8;font-weight:bold;font-style:normal;font-family:"Liberation Sans", sans-serif;transform:scaleX(0.9091);'>1</span>
<span class="t" id="t74" style='left:429.83px;top:83.37px;font-size:7px;color:#2b88d8;font-weight:bold;font-style:normal;font-family:"Liberation Sans", sans-serif;transform:scaleX(0.8696);'>2</span>
<span class="t" id="t75" style='left:429.87px;top:89.37px;font-size:7px;color:#2b88d8;font-weight:bold;font-style:normal;font-family:"Liberation Sans", sans-serif;transform:scaleX(0.8571);'>3</span>
<span class="t" id="t76" style='left:463.73px;top:77.37px;font-size:7px;color:#2b88d8;font-weight:bold;font-style:normal;font-family:"Liberation Sans", sans-serif;transform:scaleX(0.6667);'>1</span>
<span class="t" id="t77" style='left:466.42px;top:82.95px;font-size:7.5px;color:#2b88d8;font-weight:bold;font-style:normal;font-family:"Liberation Sans", sans-serif;transform:scaleX(0.8889);'>a</span>
<span class="t" id="t78" style='left:471.65px;top:88.95px;font-size:7.5px;color:#2b88d8;font-weight:bold;font-style:normal;font-family:"Liberation Sans", sans-serif;transform:scaleX(1.0909);'>i</span>
<span class="t" id="t79" style='left:558.99px;top:77.26px;font-size:9.5px;color:#2b88d8;font-weight:bold;font-style:normal;font-family:"Liberation Sans", sans-serif;transform:scaleX(1.0543);'>A</span>
<span class="t" id="t80" style='left:559.32px;top:87.26px;font-size:9.5px;color:#333;font-weight:bold;font-style:normal;font-family:"Liberation Sans", sans-serif;transform:scaleX(1.1321);'>Z</span>
<span class="t" id="t81" style='left:592.11px;top:78.91px;font-size:17px;color:#333;font-weight:normal;font-style:normal;font-family:"Liberation Sans", sans-serif;transform:scaleX(1.3051);'>¶</span>
<span class="t" id="t82" style='left:633.80px;top:84.88px;font-size:14.67px;color:#000;font-weight:normal;font-style:normal;font-family:"Liberation Sans", sans-serif;transform:scaleX(1.0047);clip-path:inset(-5px 6.3px -5px -5px);'>AaBbCcD</span>
<span class="t" id="t83" style='left:705.60px;top:84.88px;font-size:14.67px;color:#000;font-weight:normal;font-style:normal;font-family:"Liberation Sans", sans-serif;transform:scaleX(1.0047);clip-path:inset(-5px 6.3px -5px -5px);'>AaBbCcD</span>
<span class="t" id="t84" style='left:777.80px;top:81.79px;font-size:19.5px;color:#4472c4;font-weight:normal;font-style:normal;font-family:"Liberation Sans", sans-serif;transform:scaleX(0.8712);-webkit-text-stroke:0.45px #fff;'>AaBbC(</span>
<span class="t" id="t85" style='left:850.00px;top:84.88px;font-size:14.67px;color:#4472c4;font-weight:normal;font-style:normal;font-family:"Liberation Sans", sans-serif;transform:scaleX(1.0047);clip-path:inset(-5px 6.6px -5px -5px);-webkit-text-stroke:0.3px #fff;'>AaBbCcD</span>
<span class="t" id="t86" style='left:922.00px;top:70.37px;font-size:33px;color:#111;font-weight:normal;font-style:normal;font-family:"Liberation Sans", sans-serif;transform:scaleX(0.9051);clip-path:inset(8.2px -5px -5px -5px);-webkit-text-stroke:0.9px #fff;'>AaB</span>
<span class="t" id="t87" style='left:634.76px;top:111.14px;font-size:12px;color:#444;font-weight:normal;font-style:normal;font-family:"Liberation Sans", sans-serif;transform:scaleX(0.9684);'>¶ Standard</span>
<span class="t" id="t88" style='left:704.18px;top:111.14px;font-size:12px;color:#444;font-weight:normal;font-style:normal;font-family:"Liberation Sans", sans-serif;transform:scaleX(0.9250);'>¶ Kein Lee...</span>
<span class="t" id="t89" style='left:774.71px;top:111.14px;font-size:12px;color:#444;font-weight:normal;font-style:normal;font-family:"Liberation Sans", sans-serif;transform:scaleX(0.9873);'>Überschrif...</span>
<span class="t" id="t90" style='left:846.71px;top:111.14px;font-size:12px;color:#444;font-weight:normal;font-style:normal;font-family:"Liberation Sans", sans-serif;transform:scaleX(0.9873);'>Überschrif...</span>
<span class="t" id="t91" style='left:939.94px;top:111.14px;font-size:12px;color:#444;font-weight:normal;font-style:normal;font-family:"Liberation Sans", sans-serif;transform:scaleX(1.0232);'>Titel</span>
<span class="t" id="t92" style='left:1043.92px;top:73.14px;font-size:12px;color:#444;font-weight:normal;font-style:normal;font-family:"Liberation Sans", sans-serif;transform:scaleX(0.9588);'>Suchen</span>
<span class="t" id="t93" style='left:1043.52px;top:96.14px;font-size:12px;color:#444;font-weight:normal;font-style:normal;font-family:"Liberation Sans", sans-serif;transform:scaleX(0.9226);'>Ersetzen</span>
<span class="t" id="t94" style='left:1043.44px;top:119.14px;font-size:12px;color:#444;font-weight:normal;font-style:normal;font-family:"Liberation Sans", sans-serif;transform:scaleX(1.0092);'>Markieren</span>
<span class="t" id="t95" style='left:1030.34px;top:92.83px;font-size:10px;color:#b25fc2;font-weight:normal;font-style:normal;font-family:"Liberation Sans", sans-serif;transform:scaleX(1.0989);'>b</span>
<span class="t" id="t96" style='left:1034.61px;top:100.83px;font-size:10px;color:#2b88d8;font-weight:normal;font-style:normal;font-family:"Liberation Sans", sans-serif;transform:scaleX(0.9655);'>c</span>
<span class="t" id="t97" style='left:1129.44px;top:107.14px;font-size:12px;color:#444;font-weight:normal;font-style:normal;font-family:"Liberation Sans", sans-serif;transform:scaleX(1.0104);'>Diktieren</span>
<span class="t" id="t98" style='left:6.94px;top:967.14px;font-size:12px;color:#444;font-weight:normal;font-style:normal;font-family:"Liberation Sans", sans-serif;transform:scaleX(0.9221);'>Seite 1 von 1</span>
<span class="t" id="t99" style='left:91.76px;top:967.14px;font-size:12px;color:#666;font-weight:normal;font-style:normal;font-family:"Liberation Sans", sans-serif;transform:scaleX(0.9810);'>0 Wörter</span>
<span class="t" id="t100" style='left:186.29px;top:967.14px;font-size:12px;color:#444;font-weight:normal;font-style:normal;font-family:"Liberation Sans", sans-serif;transform:scaleX(0.9600);'>Deutsch (Deutschland)</span>
<span class="t" id="t101" style='left:1241.40px;top:967.14px;font-size:12px;color:#444;font-weight:normal;font-style:normal;font-family:"Liberation Sans", sans-serif;transform:scaleX(0.9135);'>95 %</span></div>
</body></html>
